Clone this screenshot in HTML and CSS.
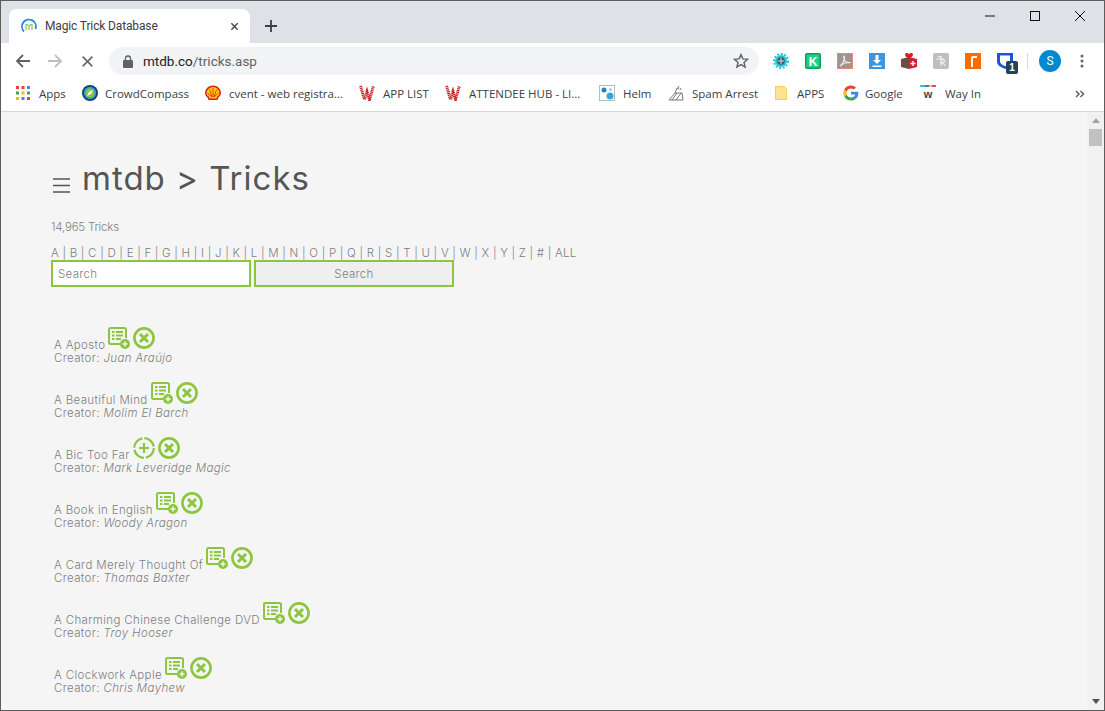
FILE: index.html
```html
<!DOCTYPE html>
<html lang="en">
<head>
<meta charset="utf-8">
<title>Magic Trick Database</title>
<link rel="stylesheet" href="styles.css">
</head>
<body>
<div class="window">
  <header class="tabstrip">
    <div class="tab">
      <svg class="fav" viewBox="0 0 16 16"><path d="M3 13.500A7 7 0 1 1 14.500 11" fill="none" stroke="#1e88e5" stroke-width="1.800"/><path d="M5 12V6.500h1.200L8 8l1.800-1.500H11V12M8 8v4" fill="none" stroke="#8bc34a" stroke-width="1.200"/></svg>
      <span class="tab-title">Magic Trick Database</span>
      <svg class="tab-close" viewBox="0 0 10 10"><path d="M1.500 1.500l7 7M8.500 1.500l-7 7" stroke="#45494d" stroke-width="1.600"/></svg>
    </div>
    <svg class="newtab" viewBox="0 0 12 12"><path d="M6 0v12M0 6h12" stroke="#3c4043" stroke-width="1.800"/></svg>
    <div class="winctl">
      <svg viewBox="0 0 10 10"><path d="M0 5h10" stroke="#111" stroke-width="1"/></svg>
      <svg viewBox="0 0 10 10"><rect x=".5" y=".5" width="9" height="9" fill="none" stroke="#111"/></svg>
      <svg viewBox="0 0 10 10"><path d="M0 0l10 10M10 0L0 10" stroke="#111" stroke-width="1"/></svg>
    </div>
  </header>

  <nav class="toolbar">
    <svg class="navbtn" viewBox="0 0 16 16"><path d="M15 8H2M8 2L2 8l6 6" fill="none" stroke="#5f6368" stroke-width="1.800"/></svg>
    <svg class="navbtn" viewBox="0 0 16 16"><path d="M1 8h13M8 2l6 6-6 6" fill="none" stroke="#bdc1c6" stroke-width="1.800"/></svg>
    <svg class="navbtn stop" viewBox="0 0 16 16"><path d="M2 2l12 12M14 2L2 14" stroke="#5f6368" stroke-width="1.800"/></svg>
    <div class="omnibox">
      <svg class="lock" viewBox="0 0 10 13"><path d="M2.500 5V3.500a2.500 2.500 0 0 1 5 0V5" fill="none" stroke="#5f6368" stroke-width="1.300"/><rect y="5" width="10" height="8" rx="1" fill="#5f6368"/></svg>
      <span class="url"><span class="url-host">mtdb.co</span>/tricks.asp</span>
      <svg class="star" viewBox="0 0 16 16"><path d="M8 1.600l1.900 4.300 4.700.4-3.600 3.100 1.100 4.600L8 11.600l-4.100 2.400L5 9.400 1.400 6.300l4.700-.4z" fill="none" stroke="#5f6368" stroke-width="1.400"/></svg>
    </div>
    <div class="exts">
      <svg class="ext" viewBox="0 0 16 16"><circle cx="8" cy="8" r="6" fill="#26c6da"/><circle cx="8" cy="8" r="7" fill="none" stroke="#26c6da" stroke-width="2" stroke-dasharray="2 1.600"/><circle cx="8" cy="8" r="3.800" fill="#455a64"/><path d="M5 8h6M8 5v6" stroke="#b2ebf2"/></svg>
      <svg class="ext" viewBox="0 0 16 16"><rect width="16" height="16" rx="2" fill="#0a9f60"/><rect x="1.500" y="1.500" width="13" height="13" rx="1" fill="#22cf88"/><text x="8" y="12.500" class="ext-k">K</text></svg>
      <svg class="ext" viewBox="0 0 16 16"><rect x=".5" y=".5" width="15" height="15" fill="#a09391" stroke="#e08a78"/><path d="M3 13c2.500-1.500 3.500-3.500 4-6.500 0-1.500-.2-3-.2-3.500 1 0 .8 2 .5 3.500C8 9 11 10 13.500 9.500c-3-.3-7 .5-10.500 3.500z" fill="none" stroke="#f1eeee" stroke-width="1.100"/></svg>
      <svg class="ext" viewBox="0 0 16 16"><rect width="16" height="16" fill="#3a96e0"/><path d="M6.500 2h3v5H12L8 11 4 7h2.500zM3.500 12.500h9V14h-9z" fill="#fff"/></svg>
      <svg class="ext" viewBox="0 0 16 16"><path d="M0 6l8-2v12l-8-2z" fill="#6d4c41"/><path d="M8 4l8 2v8l-8 2z" fill="#d81e2c"/><path d="M4 1.500a2 2 0 0 1 4 1 2 2 0 0 1 4-1c0 2-2 3-4 4-2-1-4-2-4-4z" fill="#d81e2c"/><path d="M12 8v5M9.500 10.500h5" stroke="#fff" stroke-width="1.500"/></svg>
      <svg class="ext" viewBox="0 0 16 16"><rect width="16" height="16" rx="2" fill="#bfbfbf"/><path d="M5 3.500h3v9M8 7c2-1 3.500-1 3.500 1 0 1.500-2 1.500-3.500 1 2 .5 3 2 4 3.500M3.500 6h7" fill="none" stroke="#f2f2f2" stroke-width="1.200"/></svg>
      <svg class="ext" viewBox="0 0 16 16"><rect width="16" height="16" fill="#fb6b00"/><path d="M6 14V5a2 2 0 0 1 2-2h4v2H8v9z" fill="#fff"/></svg>
      <span class="ext-badged">
        <svg class="ext" viewBox="0 0 16 16"><path d="M0 0h16v8.500c0 3.500-3.500 5.700-8 7.500-4.500-1.800-8-4-8-7.500z" fill="#1a56d6"/><path d="M3 2.500h10v6c0 2-2.500 3.700-5 4.800-2.500-1.100-5-2.800-5-4.800z" fill="#fff"/></svg>
        <span class="badge">1</span>
      </span>
      <span class="ext-sep"></span>
      <span class="avatar">S</span>
      <svg class="kebab" viewBox="0 0 4 14"><circle cx="2" cy="2" r="1.500"/><circle cx="2" cy="7" r="1.500"/><circle cx="2" cy="12" r="1.500"/></svg>
    </div>
  </nav>

  <nav class="bookmarks">
    <span class="bm bm-apps">
      <svg class="bm-ico" viewBox="0 0 14 14"><g fill="#ea4335"><rect width="3" height="3"/><rect x="5.500" width="3" height="3"/></g><rect x="11" width="3" height="3" fill="#4285f4"/><rect y="5.500" width="3" height="3" fill="#34a853"/><rect x="5.500" y="5.500" width="3" height="3" fill="#fbbc05"/><rect x="11" y="5.500" width="3" height="3" fill="#34a853"/><rect y="11" width="3" height="3" fill="#fbbc05"/><rect x="5.500" y="11" width="3" height="3" fill="#4285f4"/><rect x="11" y="11" width="3" height="3" fill="#ea4335"/></svg>Apps</span>
    <span class="bm bm-cc">
      <svg class="bm-ico" viewBox="0 0 16 16"><circle cx="8" cy="8" r="8" fill="#123f6b"/><circle cx="8" cy="8" r="6.200" fill="#2a9fd0"/><circle cx="8" cy="8" r="4.500" fill="#8bc53f"/><path d="M5 11l2-4 4-2-2 4z" fill="#fff"/></svg>CrowdCompass</span>
    <span class="bm bm-cvent">
      <svg class="bm-ico" viewBox="0 0 16 16"><path d="M8 .5a7.800 7.800 0 0 1 8 7.500c0 2-1.500 4-2.500 4.500L12.500 15h-9l-1-2.500C1.500 12 0 10 0 8A7.800 7.800 0 0 1 8 .5z" fill="#dd1d21"/><path d="M8 2a6.300 6.300 0 0 1 6.500 6c0 1.500-1 3-2.200 3.500l-.8 2h-7l-.8-2C2.500 11 1.500 9.500 1.500 8A6.300 6.300 0 0 1 8 2z" fill="#fbce07"/><path d="M8 3v9M4.500 4.500L7 12M11.500 4.500L9 12M2.500 8l4.500 4M13.500 8L9 12" stroke="#dd1d21" stroke-width=".8"/></svg>cvent - web registra...</span>
    <span class="bm bm-list">
      <svg class="bm-ico" viewBox="0 0 16 16"><path d="M1.500 1l4 13.500 2.500-8 2.500 8 4-13.500" fill="none" stroke="#c62828" stroke-width="3" stroke-dasharray="1.200 .6"/></svg>APP LIST</span>
    <span class="bm bm-hub">
      <svg class="bm-ico" viewBox="0 0 16 16"><path d="M1.500 1l4 13.500 2.500-8 2.500 8 4-13.500" fill="none" stroke="#c62828" stroke-width="3" stroke-dasharray="1.200 .6"/></svg>ATTENDEE HUB - LI...</span>
    <span class="bm bm-helm">
      <svg class="bm-ico" viewBox="0 0 16 16"><rect x=".5" y=".5" width="15" height="15" fill="#fff" stroke="#b0bec5"/><circle cx="5" cy="5" r="2.500" fill="#2a7fb8"/><circle cx="11" cy="11" r="3.500" fill="#35a7e0"/><circle cx="11.500" cy="4.500" r="1.500" fill="#9bd0ee"/></svg>Helm</span>
    <span class="bm bm-spam">
      <svg class="bm-ico" viewBox="0 0 16 16"><path d="M1 15l6-7h7l1 7zM4 15l5-7M8 15l5-7M7 8l2-5 2 1M10 3l1-2M12 5l1-2" fill="none" stroke="#777" stroke-width="1"/></svg>Spam Arrest</span>
    <span class="bm bm-apps2">
      <svg class="bm-ico" viewBox="0 0 12 14"><path d="M.5.500h9l2 2v11H.5z" fill="#fde293" stroke="#f5cf60"/></svg>APPS</span>
    <span class="bm bm-google">
      <svg class="bm-ico" viewBox="0 0 16 16"><path d="M15.300 8.200c0-.5 0-1-.1-1.500H8v2.900h4.100a3.500 3.500 0 0 1-1.500 2.300l2.400 1.900c1.400-1.300 2.300-3.300 2.300-5.600z" fill="#4285f4"/><path d="M8 15.500c2 0 3.700-.7 5-1.800l-2.400-1.900c-.7.500-1.500.7-2.600.7-2 0-3.700-1.300-4.300-3.100L1.200 11.400A7.500 7.500 0 0 0 8 15.500z" fill="#34a853"/><path d="M3.700 9.400a4.500 4.500 0 0 1 0-2.800L1.200 4.600a7.500 7.500 0 0 0 0 6.800z" fill="#fbbc05"/><path d="M8 3.500c1.100 0 2.100.4 2.900 1.100l2.100-2.100A7.500 7.500 0 0 0 1.200 4.600l2.500 2C4.300 4.800 6 3.500 8 3.500z" fill="#ea4335"/></svg>Google</span>
    <span class="bm bm-way">
      <svg class="bm-ico" viewBox="0 0 16 16"><rect width="5" height="2" fill="#26c6da"/><rect x="5" width="4" height="2" fill="#5c6bc0"/><rect x="9" width="3" height="2" fill="#fbc02d"/><rect x="12" width="4" height="2" fill="#ec407a"/><text x="8" y="13" class="way-w">w</text></svg>Way In</span>
    <svg class="bm-more" viewBox="0 0 10 8"><path d="M1 1l3 3-3 3M5.500 1l3 3-3 3" fill="none" stroke="#5f6368" stroke-width="1.500"/></svg>
  </nav>

  <div class="viewport">
    <main class="page">
      <h1 class="heading">
        <svg class="burger" viewBox="0 0 17 15"><path d="M0 1h17M0 7.500h17M0 14h17" stroke="#555" stroke-width="1.500"/></svg>
        <span>mtdb &gt; Tricks</span>
      </h1>
      <p class="count">14,965 Tricks</p>
      <p class="alpha">A | B | C | D | E | F | G | H | I | J | K | L | M | N | O | P | Q | R | S | T | U | V | W | X | Y | Z | # | ALL</p>
      <form class="search">
        <input class="search-input" type="text" placeholder="Search">
        <button class="search-btn" type="button">Search</button>
      </form>
      <ul class="tricks">
        <li class="trick"><div class="trick-name"><span>A Aposto</span><svg class="i"><use href="#list"/></svg><svg class="i i-x"><use href="#x"/></svg></div><div class="creator">Creator: <em>Juan Araújo</em></div></li>
        <li class="trick"><div class="trick-name"><span>A Beautiful Mind</span><svg class="i"><use href="#list"/></svg><svg class="i i-x"><use href="#x"/></svg></div><div class="creator">Creator: <em>Molim El Barch</em></div></li>
        <li class="trick"><div class="trick-name"><span>A Bic Too Far</span><svg class="i"><use href="#plus"/></svg><svg class="i i-x"><use href="#x"/></svg></div><div class="creator">Creator: <em>Mark Leveridge Magic</em></div></li>
        <li class="trick"><div class="trick-name"><span>A Book in English</span><svg class="i"><use href="#list"/></svg><svg class="i i-x"><use href="#x"/></svg></div><div class="creator">Creator: <em>Woody Aragon</em></div></li>
        <li class="trick"><div class="trick-name"><span>A Card Merely Thought Of</span><svg class="i"><use href="#list"/></svg><svg class="i i-x"><use href="#x"/></svg></div><div class="creator">Creator: <em>Thomas Baxter</em></div></li>
        <li class="trick"><div class="trick-name"><span>A Charming Chinese Challenge DVD</span><svg class="i"><use href="#list"/></svg><svg class="i i-x"><use href="#x"/></svg></div><div class="creator">Creator: <em>Troy Hooser</em></div></li>
        <li class="trick"><div class="trick-name"><span>A Clockwork Apple</span><svg class="i"><use href="#list"/></svg><svg class="i i-x"><use href="#x"/></svg></div><div class="creator">Creator: <em>Chris Mayhew</em></div></li>
      </ul>
    </main>
    <aside class="scrollbar">
      <svg class="arrow" viewBox="0 0 8 5"><path d="M4 0l4 5H0z" fill="#a3a3a3"/></svg>
      <span class="thumb"></span>
      <span class="track"></span>
      <svg class="arrow" viewBox="0 0 8 5"><path d="M0 0h8L4 5z" fill="#505050"/></svg>
    </aside>
  </div>
</div>
<svg class="defs" width="0" height="0">
  <defs>
    <symbol id="list" viewBox="0 0 22 22">
      <path d="M13 17H2.500A1.500 1.500 0 0 1 1 15.500V2.500A1.500 1.500 0 0 1 2.500 1h14A1.500 1.500 0 0 1 18 2.500V11" fill="none" stroke="#8cc63f" stroke-width="2"/>
      <path d="M4 5h2.500M8 5h7M4 8.500h2.500M8 8.500h7M4 12h2.500M8 12h5" stroke="#8cc63f" stroke-width="2"/>
      <circle cx="17" cy="17" r="5" fill="#8cc63f"/>
      <path d="M14.500 17h5M17 14.500v5" stroke="#f5f5f5" stroke-width="1.500"/>
    </symbol>
    <symbol id="x" viewBox="0 0 22 22">
      <circle cx="11" cy="11" r="9.600" fill="none" stroke="#8cc63f" stroke-width="2.600"/>
      <path d="M7 7l8 8M15 7l-8 8" stroke="#8cc63f" stroke-width="3"/>
    </symbol>
    <symbol id="plus" viewBox="0 0 22 22">
      <circle cx="11" cy="11" r="9.800" fill="none" stroke="#8cc63f" stroke-width="2.200" stroke-dasharray="13.400 2"/>
      <path d="M11 6v10M6 11h10" stroke="#8cc63f" stroke-width="2.200"/>
    </symbol>
  </defs>
</svg>
</body>
</html>
```
FILE: styles.css
```css
* { box-sizing: border-box; }
html, body { margin: 0; padding: 0; height: 100%; overflow: hidden; }
body { font-family: "Open Sans", "Liberation Sans", sans-serif; }
.window { width: 1105px; height: 711px; border: 1px solid #5c5c5c; display: flex; flex-direction: column; background: #fff; overflow: hidden; }

.tabstrip { height: 42px; flex: none; background: #dee1e6; display: flex; align-items: flex-end; padding-left: 8px; }
.tab { width: 241px; height: 34px; background: #fff; border-radius: 8px 8px 0 0; display: flex; align-items: center; padding: 0 11px 0 12px; }
.fav { width: 16px; height: 16px; flex: none; }
.tab-title { font: 12px "Roboto", "Liberation Sans", sans-serif; letter-spacing: -.14px; color: #3c4043; margin-left: 8px; flex: 1; }
.tab-close { width: 9px; height: 9px; }
.newtab { width: 12px; height: 12px; margin: 0 0 11px 15px; }
.winctl { margin-left: auto; align-self: flex-start; display: flex; gap: 35px; padding: 10px 19px 0 0; }
.winctl svg { width: 10px; height: 10px; }

.toolbar { height: 33px; flex: none; display: flex; align-items: center; padding: 4px 0 1px 14px; background: #fff; }
.navbtn { width: 16px; height: 16px; margin-right: 16px; flex: none; }
.navbtn.stop { width: 13px; height: 13px; margin-left: 2px; margin-right: 15px; }
.omnibox { width: 650px; height: 28px; background: #f1f3f4; border-radius: 14px; display: flex; align-items: center; padding: 0 10px 0 14px; flex: none; }
.lock { width: 10px; height: 13px; flex: none; }
.url { font: 13.500px "Roboto", "Liberation Sans", sans-serif; color: #5f6368; margin-left: 10px; flex: 1; }
.url-host { color: #202124; }
.star { width: 16px; height: 16px; }
.exts { display: flex; align-items: center; flex: none; padding-left: 14px; }
.ext { width: 16px; height: 16px; flex: none; margin-right: 16px; display: block; }
.ext-k { font: bold 12px "Liberation Sans", sans-serif; fill: #fff; text-anchor: middle; }
.ext-badged { position: relative; display: block; }
.badge { position: absolute; left: 9px; top: 8px; width: 12px; height: 13px; border-radius: 2px; background: #22445a; color: #fff; font: bold 10px/13px "Liberation Sans", sans-serif; text-align: center; }
.ext-sep { width: 1px; height: 16px; background: #d5d7da; margin: 0 11px 0 -2px; }
.avatar { width: 22px; height: 22px; border-radius: 50%; background: #0288d1; color: #fff; font: 12px/22px "Roboto", sans-serif; text-align: center; }
.kebab { width: 4px; height: 14px; margin-left: 19px; fill: #5f6368; }

.bookmarks { height: 36px; flex: none; display: flex; align-items: center; padding: 0 0 1px 15px; background: #fff; border-bottom: 1px solid #d5d7da; position: relative; }
.bm { font: 11.500px "Open Sans", "Liberation Sans", sans-serif; color: #3c4043; display: flex; align-items: center; white-space: nowrap; flex: none; }
.bm-ico { width: 16px; height: 16px; margin-right: 8px; flex: none; }
.way-w { font: bold 11px "Liberation Sans", sans-serif; fill: #444; text-anchor: middle; }
.bm-apps { width: 66px; }
.bm-apps .bm-ico { width: 14px; height: 14px; margin-right: 9px; }
.bm-cc { width: 123px; }
.bm-cc .bm-ico { margin-right: 7px; }
.bm-cvent { width: 154px; }
.bm-list { width: 86px; }
.bm-hub { width: 154px; }
.bm-helm { width: 69px; }
.bm-spam { width: 107px; }
.bm-apps2 { width: 68px; }
.bm-apps2 .bm-ico { width: 12px; height: 14px; margin-right: 10px; }
.bm-google { width: 77px; }
.bm-google .bm-ico { margin-right: 6px; }
.bm-way { width: 70px; }
.bm-way .bm-ico { margin-right: 9px; }
.bm-more { position: absolute; right: 19px; top: 14px; width: 10px; height: 8px; }

.viewport { flex: 1; min-height: 0; display: flex; background: #f5f5f5; }
.page { flex: 1; min-width: 0; padding: 44px 0 0 50px; color: #808080; font: 300 11.500px "Inter", "Liberation Sans", sans-serif; overflow: hidden; }
.heading { margin: 0; display: flex; align-items: flex-end; height: 44px; font: 400 33px/44px "Inter", "Liberation Sans", sans-serif; color: #555; letter-spacing: 1px; }
.burger { width: 17px; height: 15px; margin: 0 12px 7px 2px; flex: none; }
.count { margin: 19px 0 0; line-height: 16px; letter-spacing: -.2px; }
.alpha { margin: 11px 0 0; line-height: 14px; letter-spacing: .22px; white-space: nowrap; }
.search { display: flex; gap: 3px; height: 27px; }
.search-input { width: 200px; height: 27px; border: 2px solid #8cc63f; background: #fff; padding: 0 5px; font: 300 11.500px "Inter", sans-serif; letter-spacing: .3px; outline: none; }
.search-input::placeholder { color: #808080; opacity: 1; }
.search-btn { width: 200px; height: 27px; border: 2px solid #8cc63f; background: #efefef; font: 300 11.500px "Inter", sans-serif; letter-spacing: .3px; color: #808080; padding: 0; }
.tricks { list-style: none; margin: 0; padding: 41px 0 0 3px; }
.trick { height: 55px; }
.trick-name { display: flex; align-items: flex-end; height: 24px; line-height: 13px; letter-spacing: .36px; }
.creator { line-height: 13px; letter-spacing: .36px; }
.creator em { font-style: italic; }
.i { width: 22px; height: 22px; margin: 0 0 3px 3px; flex: none; }
.defs { position: absolute; }

.scrollbar { width: 17px; flex: none; background: #f1f1f1; display: flex; flex-direction: column; align-items: center; }
.arrow { width: 8px; height: 5px; margin: 6px 0; flex: none; }
.thumb { width: 13px; height: 17px; background: #c1c1c1; flex: none; }
.track { flex: 1; }
```
